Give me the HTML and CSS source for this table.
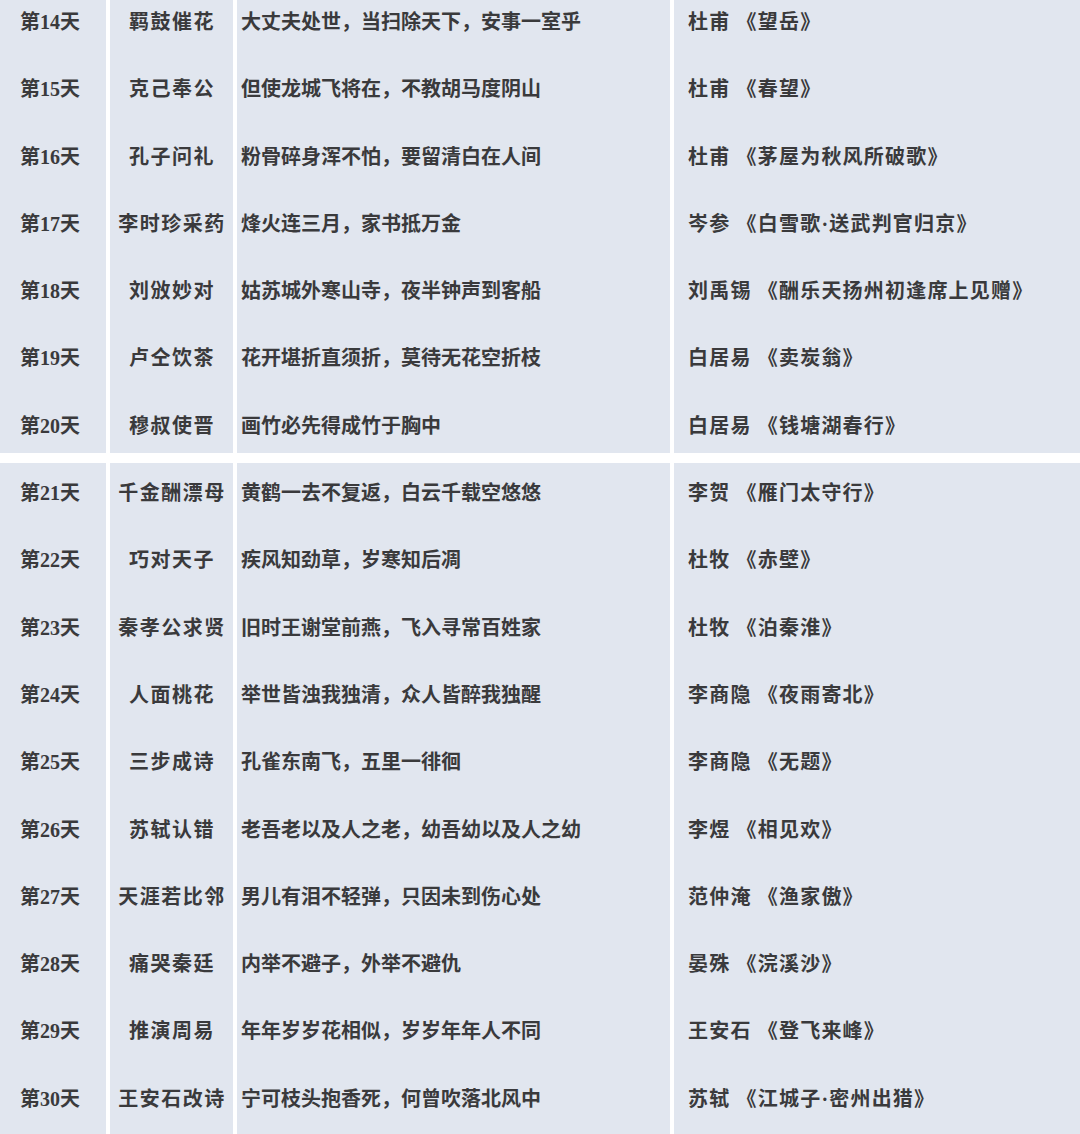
FILE: index.html
```html
<!DOCTYPE html>
<html lang="zh-CN">
<head>
<meta charset="utf-8">
<link rel="stylesheet" href="styles.css">
</head>
<body>
<div class="sheet">
  <div class="group">
    <div class="row"><div class="day">第14天</div><div class="story">羁鼓催花</div><div class="verse">大丈夫处世，当扫除天下，安事一室乎</div><div class="source">杜甫 《望岳》</div></div>
    <div class="row"><div class="day">第15天</div><div class="story">克己奉公</div><div class="verse">但使龙城飞将在，不教胡马度阴山</div><div class="source">杜甫 《春望》</div></div>
    <div class="row"><div class="day">第16天</div><div class="story">孔子问礼</div><div class="verse">粉骨碎身浑不怕，要留清白在人间</div><div class="source">杜甫 《茅屋为秋风所破歌》</div></div>
    <div class="row"><div class="day">第17天</div><div class="story">李时珍采药</div><div class="verse">烽火连三月，家书抵万金</div><div class="source">岑参 《白雪歌·送武判官归京》</div></div>
    <div class="row"><div class="day">第18天</div><div class="story">刘攽妙对</div><div class="verse">姑苏城外寒山寺，夜半钟声到客船</div><div class="source">刘禹锡 《酬乐天扬州初逢席上见赠》</div></div>
    <div class="row"><div class="day">第19天</div><div class="story">卢仝饮茶</div><div class="verse">花开堪折直须折，莫待无花空折枝</div><div class="source">白居易 《卖炭翁》</div></div>
    <div class="row row-last"><div class="day">第20天</div><div class="story">穆叔使晋</div><div class="verse">画竹必先得成竹于胸中</div><div class="source">白居易 《钱塘湖春行》</div></div>
  </div>
  <div class="group">
    <div class="row row-first"><div class="day">第21天</div><div class="story">千金酬漂母</div><div class="verse">黄鹤一去不复返，白云千载空悠悠</div><div class="source">李贺 《雁门太守行》</div></div>
    <div class="row"><div class="day">第22天</div><div class="story">巧对天子</div><div class="verse">疾风知劲草，岁寒知后凋</div><div class="source">杜牧 《赤壁》</div></div>
    <div class="row"><div class="day">第23天</div><div class="story">秦孝公求贤</div><div class="verse">旧时王谢堂前燕，飞入寻常百姓家</div><div class="source">杜牧 《泊秦淮》</div></div>
    <div class="row"><div class="day">第24天</div><div class="story">人面桃花</div><div class="verse">举世皆浊我独清，众人皆醉我独醒</div><div class="source">李商隐 《夜雨寄北》</div></div>
    <div class="row"><div class="day">第25天</div><div class="story">三步成诗</div><div class="verse">孔雀东南飞，五里一徘徊</div><div class="source">李商隐 《无题》</div></div>
    <div class="row"><div class="day">第26天</div><div class="story">苏轼认错</div><div class="verse">老吾老以及人之老，幼吾幼以及人之幼</div><div class="source">李煜 《相见欢》</div></div>
    <div class="row"><div class="day">第27天</div><div class="story">天涯若比邻</div><div class="verse">男儿有泪不轻弹，只因未到伤心处</div><div class="source">范仲淹 《渔家傲》</div></div>
    <div class="row"><div class="day">第28天</div><div class="story">痛哭秦廷</div><div class="verse">内举不避子，外举不避仇</div><div class="source">晏殊 《浣溪沙》</div></div>
    <div class="row"><div class="day">第29天</div><div class="story">推演周易</div><div class="verse">年年岁岁花相似，岁岁年年人不同</div><div class="source">王安石 《登飞来峰》</div></div>
    <div class="row row-end"><div class="day">第30天</div><div class="story">王安石改诗</div><div class="verse">宁可枝头抱香死，何曾吹落北风中</div><div class="source">苏轼 《江城子·密州出猎》</div></div>
  </div>
</div>
</body>
</html>
```

FILE: styles.css
```css
html, body {
  margin: 0;
  padding: 0;
  background: #ffffff;
}

body {
  width: 1080px;
  height: 1134px;
  overflow: hidden;
  font-family: "Liberation Serif", "Noto Sans CJK SC", serif;
  font-size: 20px;
  font-weight: 700;
  color: #3a3a3c;
}

.sheet {
  margin-top: -13.15px;
  display: flex;
  flex-direction: column;
  gap: 10px;
}

.group {
  display: flex;
  flex-direction: column;
}

.row {
  display: grid;
  grid-template-columns: 106px 123px 433px 1fr;
  column-gap: 4px;
  height: 67.3px;
}

.row > div {
  background: #e1e6ef;
  display: flex;
  align-items: center;
  white-space: nowrap;
  box-sizing: border-box;
}

.row-last {
  height: 62.3px;
}
.row-last > div {
  padding-top: 5px;
}

.row-first {
  height: 62.3px;
}
.row-first > div {
  padding-bottom: 5px;
}

.row-end {
  height: 80px;
}
.row-end > div {
  padding-bottom: 12.7px;
}

.day {
  justify-content: center;
  padding-right: 6px;
}

.story {
  justify-content: center;
  letter-spacing: 1.5px;
  padding-left: 1px;
}

.verse {
  padding-left: 4px;
}

.source {
  padding-left: 14px;
  letter-spacing: 1.2px;
}
```
